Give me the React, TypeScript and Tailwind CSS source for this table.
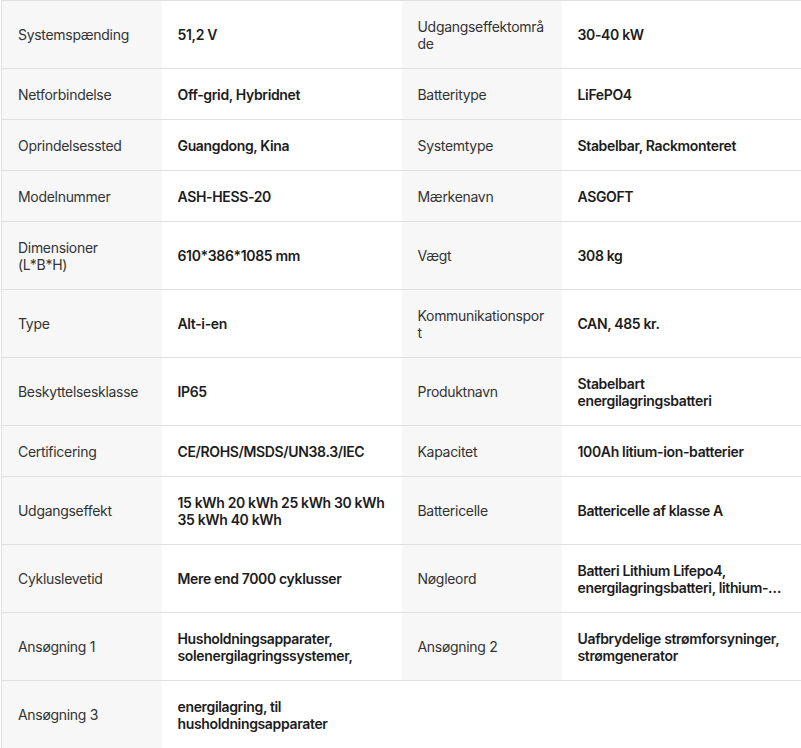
// Product specification table: label/value pairs laid out two per row.

type Spec = { label: string; value: string };

const rows: [Spec, Spec | null][] = [
  [
    { label: "Systemspænding", value: "51,2 V" },
    { label: "Udgangseffektområde", value: "30-40 kW" },
  ],
  [
    { label: "Netforbindelse", value: "Off-grid, Hybridnet" },
    { label: "Batteritype", value: "LiFePO4" },
  ],
  [
    { label: "Oprindelsessted", value: "Guangdong, Kina" },
    { label: "Systemtype", value: "Stabelbar, Rackmonteret" },
  ],
  [
    { label: "Modelnummer", value: "ASH-HESS-20" },
    { label: "Mærkenavn", value: "ASGOFT" },
  ],
  [
    { label: "Dimensioner (L*B*H)", value: "610*386*1085 mm" },
    { label: "Vægt", value: "308 kg" },
  ],
  [
    { label: "Type", value: "Alt-i-en" },
    { label: "Kommunikationsport", value: "CAN, 485 kr." },
  ],
  [
    { label: "Beskyttelsesklasse", value: "IP65" },
    // the source font breaks these where the newline sits
    { label: "Produktnavn", value: "Stabelbart\nenergilagringsbatteri" },
  ],
  [
    { label: "Certificering", value: "CE/ROHS/MSDS/UN38.3/IEC" },
    { label: "Kapacitet", value: "100Ah litium-ion-batterier" },
  ],
  [
    { label: "Udgangseffekt", value: "15 kWh 20 kWh 25 kWh 30 kWh\n35 kWh 40 kWh" },
    { label: "Battericelle", value: "Battericelle af klasse A" },
  ],
  [
    { label: "Cykluslevetid", value: "Mere end 7000 cyklusser" },
    {
      label: "Nøgleord",
      value: "Batteri Lithium Lifepo4, energilagringsbatteri, lithium-ion-batteri, solbatteri",
    },
  ],
  [
    { label: "Ansøgning 1", value: "Husholdningsapparater, solenergilagringssystemer," },
    { label: "Ansøgning 2", value: "Uafbrydelige strømforsyninger, strømgenerator" },
  ],
  [{ label: "Ansøgning 3", value: "energilagring, til husholdningsapparater" }, null],
];

function Label({ text }: { text: string }) {
  return (
    <td className="bg-[#f7f7f7] px-4 py-[16.5px] align-middle text-[14px] leading-[17px] tracking-[-0.3px] text-[#333] [overflow-wrap:anywhere]">
      {text}
    </td>
  );
}

function Value({ text }: { text: string }) {
  return (
    <td className="px-4 py-[16.5px] align-middle text-[14px] font-semibold leading-[17px] tracking-[-0.35px] text-[#1c1c1c]">
      <span className="line-clamp-2 whitespace-pre-line">{text}</span>
    </td>
  );
}

export default function App() {
  return (
    <div className="h-[748px] w-[801px] overflow-hidden bg-white pl-px font-['Inter','Liberation_Sans',sans-serif]">
      <table className="w-[800px] table-fixed border-collapse border-l border-t border-[#e0e0e0]">
        <colgroup>
          <col className="w-[160px]" />
          <col className="w-[240px]" />
          <col className="w-[160px]" />
          <col className="w-[240px]" />
        </colgroup>
        <tbody>
          {rows.map(([a, b]) => (
            <tr key={a.label} className="border-b border-[#e0e0e0]">
              <Label text={a.label} />
              <Value text={a.value} />
              {b ? (
                <>
                  <Label text={b.label} />
                  <Value text={b.value} />
                </>
              ) : (
                <td colSpan={2} className="bg-white" />
              )}
            </tr>
          ))}
        </tbody>
      </table>
    </div>
  );
}
